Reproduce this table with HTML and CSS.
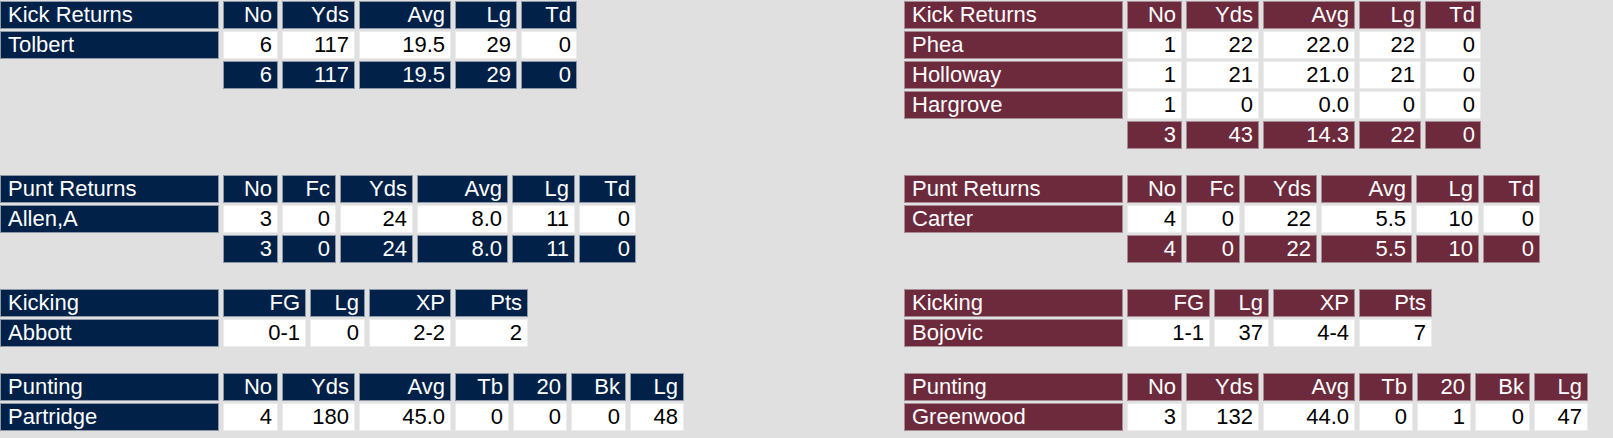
FILE: index.html
```html
<!DOCTYPE html>
<html lang="en">
<head>
<meta charset="utf-8">
<title>Special Teams</title>
<link rel="stylesheet" href="styles.css">
</head>
<body>
<div class="page">
  <!-- Kick Returns -->
  <div class="stat kr away">
    <div class="c n">Kick Returns</div><div class="c h">No</div><div class="c h">Yds</div><div class="c h">Avg</div><div class="c h">Lg</div><div class="c h">Td</div>
    <div class="c n">Tolbert</div><div class="c d">6</div><div class="c d">117</div><div class="c d">19.5</div><div class="c d">29</div><div class="c d">0</div>
    <div class="c e"></div><div class="c h">6</div><div class="c h">117</div><div class="c h">19.5</div><div class="c h">29</div><div class="c h">0</div>
  </div>
  <div class="stat kr home">
    <div class="c n">Kick Returns</div><div class="c h">No</div><div class="c h">Yds</div><div class="c h">Avg</div><div class="c h">Lg</div><div class="c h">Td</div>
    <div class="c n">Phea</div><div class="c d">1</div><div class="c d">22</div><div class="c d">22.0</div><div class="c d">22</div><div class="c d">0</div>
    <div class="c n">Holloway</div><div class="c d">1</div><div class="c d">21</div><div class="c d">21.0</div><div class="c d">21</div><div class="c d">0</div>
    <div class="c n">Hargrove</div><div class="c d">1</div><div class="c d">0</div><div class="c d">0.0</div><div class="c d">0</div><div class="c d">0</div>
    <div class="c e"></div><div class="c h">3</div><div class="c h">43</div><div class="c h">14.3</div><div class="c h">22</div><div class="c h">0</div>
  </div>

  <!-- Punt Returns -->
  <div class="stat pr away">
    <div class="c n">Punt Returns</div><div class="c h">No</div><div class="c h">Fc</div><div class="c h">Yds</div><div class="c h">Avg</div><div class="c h">Lg</div><div class="c h">Td</div>
    <div class="c n">Allen,A</div><div class="c d">3</div><div class="c d">0</div><div class="c d">24</div><div class="c d">8.0</div><div class="c d">11</div><div class="c d">0</div>
    <div class="c e"></div><div class="c h">3</div><div class="c h">0</div><div class="c h">24</div><div class="c h">8.0</div><div class="c h">11</div><div class="c h">0</div>
  </div>
  <div class="stat pr home">
    <div class="c n">Punt Returns</div><div class="c h">No</div><div class="c h">Fc</div><div class="c h">Yds</div><div class="c h">Avg</div><div class="c h">Lg</div><div class="c h">Td</div>
    <div class="c n">Carter</div><div class="c d">4</div><div class="c d">0</div><div class="c d">22</div><div class="c d">5.5</div><div class="c d">10</div><div class="c d">0</div>
    <div class="c e"></div><div class="c h">4</div><div class="c h">0</div><div class="c h">22</div><div class="c h">5.5</div><div class="c h">10</div><div class="c h">0</div>
  </div>

  <!-- Kicking -->
  <div class="stat kk away">
    <div class="c n">Kicking</div><div class="c h">FG</div><div class="c h">Lg</div><div class="c h">XP</div><div class="c h">Pts</div>
    <div class="c n">Abbott</div><div class="c d">0-1</div><div class="c d">0</div><div class="c d">2-2</div><div class="c d">2</div>
  </div>
  <div class="stat kk home">
    <div class="c n">Kicking</div><div class="c h">FG</div><div class="c h">Lg</div><div class="c h">XP</div><div class="c h">Pts</div>
    <div class="c n">Bojovic</div><div class="c d">1-1</div><div class="c d">37</div><div class="c d">4-4</div><div class="c d">7</div>
  </div>

  <!-- Punting -->
  <div class="stat pt away">
    <div class="c n">Punting</div><div class="c h">No</div><div class="c h">Yds</div><div class="c h">Avg</div><div class="c h">Tb</div><div class="c h">20</div><div class="c h">Bk</div><div class="c h">Lg</div>
    <div class="c n">Partridge</div><div class="c d">4</div><div class="c d">180</div><div class="c d">45.0</div><div class="c d">0</div><div class="c d">0</div><div class="c d">0</div><div class="c d">48</div>
  </div>
  <div class="stat pt home">
    <div class="c n">Punting</div><div class="c h">No</div><div class="c h">Yds</div><div class="c h">Avg</div><div class="c h">Tb</div><div class="c h">20</div><div class="c h">Bk</div><div class="c h">Lg</div>
    <div class="c n">Greenwood</div><div class="c d">3</div><div class="c d">132</div><div class="c d">44.0</div><div class="c d">0</div><div class="c d">1</div><div class="c d">0</div><div class="c d">47</div>
  </div>
</div>
</body>
</html>
```
FILE: styles.css
```css
html, body {
  margin: 0;
  padding: 0;
  background: #e0e0e0;
}

body {
  font-family: "Liberation Sans", Arial, sans-serif;
  font-size: 22px;
  color: #000;
}

.page {
  display: grid;
  grid-template-columns: 904px auto;
  justify-content: start;
  align-items: start;
  row-gap: 26px;
  padding-top: 1px;
}

.stat {
  display: grid;
  column-gap: 4px;
  row-gap: 2px;
  justify-content: start;
}

.away { --team: #012148; --edge: #8c97a8; }
.home { --team: #6d2a3d; --edge: #a88c95; }

.kr { grid-template-columns: 219px 55px 73px 92px 62px 56px; }
.pr { grid-template-columns: 219px 55px 54px 73px 91px 63px 57px; }
.kk { grid-template-columns: 219px 83px 55px 82px 73px; }
.pt { grid-template-columns: 219px 55px 73px 92px 54px 54px 55px 54px; }

.c {
  box-sizing: border-box;
  height: 28px;
  line-height: 26px;
  border: 1px solid transparent;
  padding: 0 5px 0 0;
  text-align: right;
  white-space: nowrap;
  overflow: hidden;
}

.n {
  background: var(--team);
  border-color: var(--edge);
  color: #fff;
  text-align: left;
  padding: 0 0 0 7px;
}

.h {
  background: var(--team);
  border-color: var(--edge);
  color: #fff;
}

.d {
  background: #fff;
  border-color: #ececec;
  color: #000;
}

.e {
  background: transparent;
}
```
